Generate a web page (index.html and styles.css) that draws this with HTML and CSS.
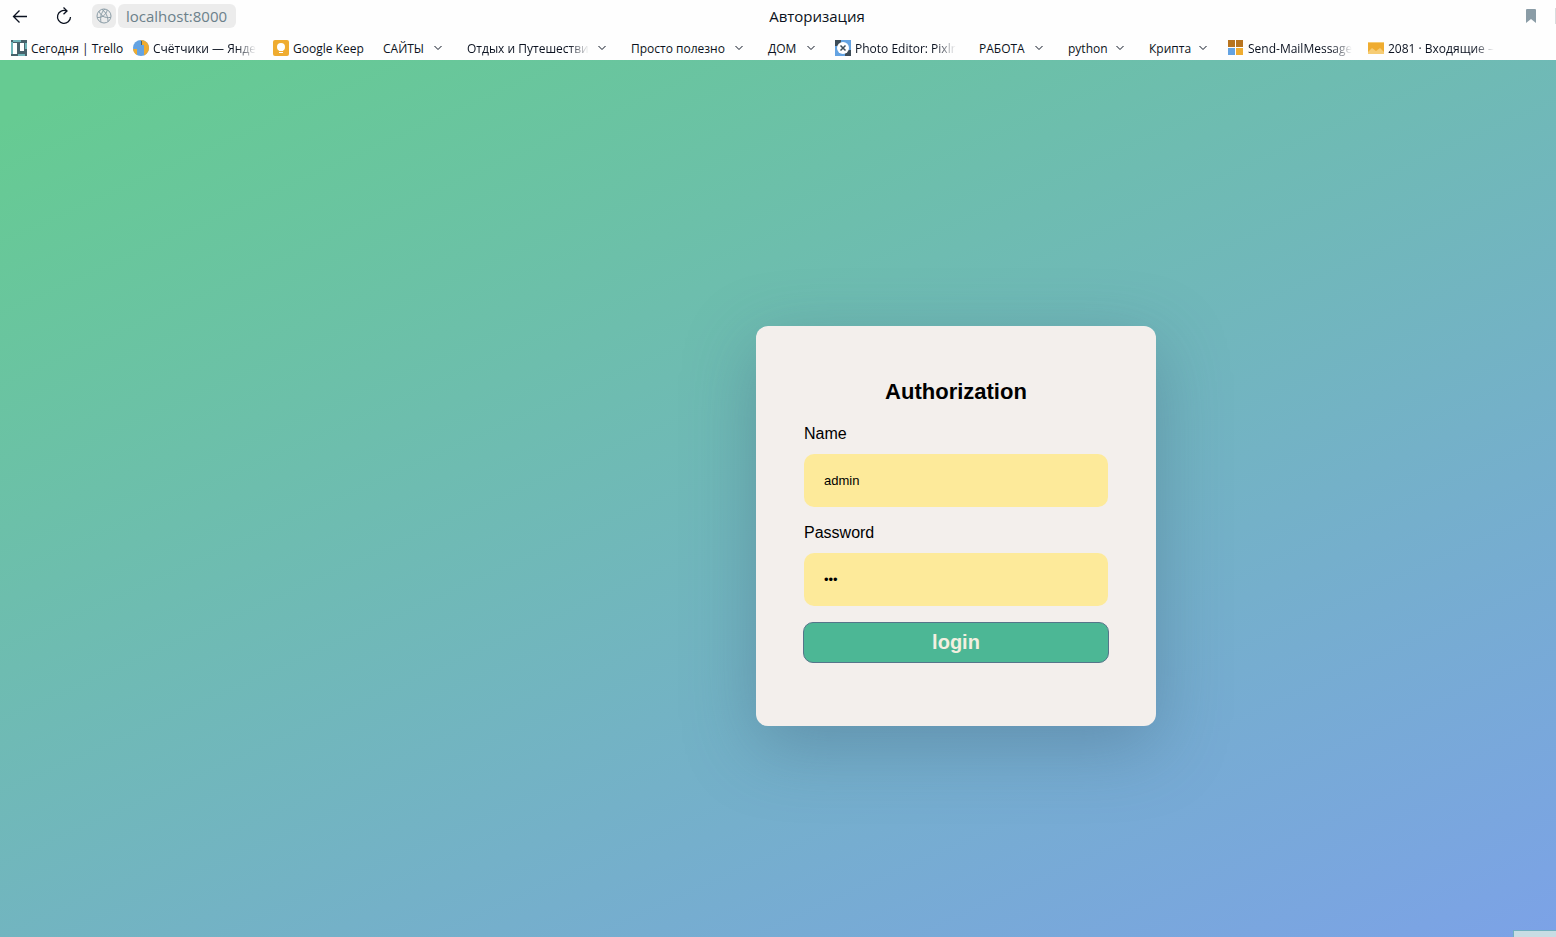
FILE: index.html
```html
<!DOCTYPE html>
<html lang="ru">
<head>
<meta charset="utf-8">
<title>Авторизация</title>
<link rel="stylesheet" href="styles.css">
</head>
<body>
<header class="browser">
  <div class="toolbar">
    <button class="tool" type="button" aria-label="Back"><svg width="16" height="16" viewBox="0 0 16 16"><path d="M15 8.500H1.500M7.500 2.500l-6 6 6 6"/></svg></button>
    <button class="tool" type="button" aria-label="Reload"><svg width="16" height="18" viewBox="0 0 16 18"><path d="M10.500 3.900A6.500 6.500 0 1 0 14.500 10M7.500 .5l3.500 3.400-3.500 3.300"/></svg></button>
    <div class="address">
      <button class="site" type="button" aria-label="Site information"><svg width="16" height="16" viewBox="0 0 16 16"><circle cx="8" cy="8" r="7"/><path d="M3 3.200C5 8 8 10 14.600 9.500M1.200 9.500C6 9.800 10 7 11.200 2M5 14.300C4 9 5 5 8.700 1.200M12 13.500C12 9 10 4 6 1.500"/></svg></button>
      <a class="url" href="#">localhost:8000</a>
    </div>
    <div class="page-title">Авторизация</div>
    <div class="actions">
      <button class="save" type="button" aria-label="Bookmark"><svg width="10" height="14" viewBox="0 0 10 14"><path d="M1 0h8a1 1 0 0 1 1 1v13L5 10 0 14V1a1 1 0 0 1 1-1z"/></svg></button>
      <span class="edge"></span>
    </div>
  </div>
  <nav class="bookmarks" aria-label="Bookmarks">
    <a class="mark" href="#"><svg width="16" height="16" viewBox="0 0 16 16"><path fill="#47626b" d="M0 0h16v16H0z"/><path fill="#70b5b9" d="M0 2h2v12H0zM2 0h8v2H2zM7 14h7v2H7zM14 3h2v6h-2z"/><path fill="#fff" d="M2 3h4v11H2zM9 3h4v8H9z"/></svg><span>Сегодня | Trello</span></a>
    <a class="mark cut" href="#"><svg width="16" height="16" viewBox="0 0 16 16"><circle cx="8" cy="8" r="8" fill="#64a3e2"/><path fill="#efac30" d="M8 0a8 8 0 0 1 3 15.400V5H8z"/><path fill="#efac30" d="M0 9h4v6A8 8 0 0 1 0 9z"/><path fill="#47626b" d="M8 1h1v4H8z"/></svg><span>Счётчики — Янде</span></a>
    <a class="mark" href="#"><svg width="16" height="16" viewBox="0 0 16 16"><rect width="16" height="16" rx="2" fill="#efac30"/><circle cx="8" cy="7" r="4" fill="#fff"/><path fill="#fff" d="M6 9h4v2H6zM6 12h4v1H6z"/></svg><span>Google Keep</span></a>
    <a class="mark folder" href="#"><span>САЙТЫ</span><svg width="8" height="6" viewBox="0 0 8 6"><path d="M.5 1L4 4.500 7.500 1"/></svg></a>
    <a class="mark folder cut" href="#"><span>Отдых и Путешестви</span><svg width="8" height="6" viewBox="0 0 8 6"><path d="M.5 1L4 4.500 7.500 1"/></svg></a>
    <a class="mark folder" href="#"><span>Просто полезно</span><svg width="8" height="6" viewBox="0 0 8 6"><path d="M.5 1L4 4.500 7.500 1"/></svg></a>
    <a class="mark folder last" href="#"><span>ДОМ</span><svg width="8" height="6" viewBox="0 0 8 6"><path d="M.5 1L4 4.500 7.500 1"/></svg></a>
    <a class="mark cut" href="#"><svg width="16" height="16" viewBox="0 0 16 16"><path fill="#64a3e2" d="M0 0h16v16H0z"/><path fill="#3d4c58" d="M0 0h6v6H0zM10 10h6v6h-6z"/><circle cx="8" cy="8" r="6" fill="#fff"/><path stroke="#3d4c58" stroke-width="1.500" d="M5.500 5.500l5 5M10.500 5.500l-5 5"/></svg><span>Photo Editor: Pixlr</span></a>
    <a class="mark folder" href="#"><span>РАБОТА</span><svg width="8" height="6" viewBox="0 0 8 6"><path d="M.5 1L4 4.500 7.500 1"/></svg></a>
    <a class="mark folder" href="#"><span>python</span><svg width="8" height="6" viewBox="0 0 8 6"><path d="M.5 1L4 4.500 7.500 1"/></svg></a>
    <a class="mark folder" href="#"><span>Крипта</span><svg width="8" height="6" viewBox="0 0 8 6"><path d="M.5 1L4 4.500 7.500 1"/></svg></a>
    <a class="mark cut" href="#"><svg width="16" height="16" viewBox="0 0 16 16"><path fill="#b8741f" d="M0 0h7v7H0zM8 0h7v7H8z"/><path fill="#64a3e2" d="M0 8h7v7H0z"/><path fill="#efac30" d="M8 8h7v7H8z"/></svg><span>Send-MailMessage</span></a>
    <a class="mark cut" href="#"><svg width="16" height="16" viewBox="0 0 16 16"><path fill="#efac30" d="M0 2h16v12H0z"/><path fill="#f6cc74" d="M0 2h16v1H0zM0 14v-2l4-4 4 3 4-3 4 4v2z"/></svg><span>2081 · Входящие –</span></a>
  </nav>
</header>
<main class="page">
  <form class="card">
    <h1 class="heading">Authorization</h1>
    <label class="label" for="name">Name</label>
    <input class="field" id="name" type="text" value="admin">
    <label class="label" for="password">Password</label>
    <input class="field" id="password" type="password" value="123">
    <button class="login" type="button">login</button>
  </form>
  <div class="status"></div>
</main>
</body>
</html>
```
FILE: styles.css
```css
* {
  box-sizing: border-box;
}

body {
  margin: 0;
  min-height: 100vh;
  display: flex;
  flex-direction: column;
  font-family: "Liberation Sans", Arial, sans-serif;
  color: #000;
}

button {
  border: 0;
  padding: 0;
  background: none;
}

.browser {
  background: #fefefe;
  font-family: "Open Sans", "Noto Sans", sans-serif;
  color: #0b1220;
}

.toolbar {
  display: flex;
  align-items: center;
  height: 32px;
  padding-left: 12px;
}

.tool {
  display: flex;
  width: 16px;
  margin-right: 28px;
}

.tool + .tool {
  margin-right: 20px;
}

.tool svg,
.site svg,
.folder svg {
  fill: none;
  stroke: #0b1220;
  stroke-width: 1.3;
}

.address {
  display: flex;
  gap: 2px;
}

.site {
  display: grid;
  place-items: center;
  width: 24px;
  height: 24px;
  border-radius: 6px;
  background: #ececec;
}

.site svg {
  stroke: #8a9ca6;
  stroke-width: 1;
}

.url {
  width: 118px;
  height: 24px;
  padding-left: 8px;
  border-radius: 6px;
  background: #ececec;
  color: #6b808a;
  font-size: 15px;
  line-height: 24px;
  text-decoration: none;
}

.page-title {
  flex: 1;
  text-align: center;
  font-size: 15px;
  line-height: 24px;
}

.actions {
  display: flex;
  justify-content: flex-end;
  align-items: center;
  gap: 19px;
  width: 158px;
}

.save {
  display: flex;
}

.save svg {
  fill: #8a9ca6;
}

.edge {
  width: 1px;
  height: 16px;
  background: #d8dcde;
}

.bookmarks {
  display: grid;
  grid-template-columns: 122px 140px 110px 84px 164px 137px 67px 144px 89px 81px 79px 140px 140px;
  height: 28px;
  padding: 4px 0 0 11px;
}

.mark {
  display: flex;
  align-items: center;
  gap: 4px;
  height: 24px;
  color: inherit;
  font-size: 12px;
  line-height: 16px;
  text-decoration: none;
  white-space: nowrap;
}

.mark svg {
  flex: none;
}

.mark span {
  padding-top: 1px;
}

.cut span {
  -webkit-mask-image: linear-gradient(to left, transparent, #000 20px);
  mask-image: linear-gradient(to left, transparent, #000 20px);
}

.folder {
  justify-content: space-between;
  gap: 8px;
  padding-right: 25px;
}

.last {
  padding-right: 20px;
}

.folder svg {
  stroke-width: 1;
}

.page {
  position: relative;
  flex: 1;
  display: flex;
  justify-content: center;
  align-items: center;
  padding: 55px 0 0 356px;
  background: linear-gradient(156deg, #66cb92 4%, #7ca2e7 100%);
}

.card {
  display: flex;
  flex-direction: column;
  width: 400px;
  min-height: 400px;
  padding: 48px;
  border-radius: 12px;
  background: #f3efec;
  box-shadow: 0 20px 70px rgba(60, 90, 120, 0.36);
}

.heading {
  margin: 0 0 16px;
  font-size: 22px;
  line-height: 36px;
  text-align: center;
}

.label {
  padding-bottom: 12px;
  font-size: 16px;
  line-height: 16px;
}

.field {
  height: 53px;
  margin-bottom: 18px;
  padding: 0 20px;
  border: 0;
  border-radius: 10px;
  outline: 0;
  background: #fdea9a;
  font-family: inherit;
  font-size: 13px;
  color: #000;
}

.login {
  height: 41px;
  margin: -2px -1px 0;
  border: 1px solid #55758a;
  border-radius: 10px;
  background: #4cb795;
  color: #f3efe0;
  font-family: inherit;
  font-size: 20px;
  font-weight: 700;
}

.status {
  position: absolute;
  right: 0;
  bottom: 0;
  width: 43px;
  height: 7px;
  border: 1px solid #70b0c0;
  border-width: 1px 0 0 1px;
  background: #c8dde4;
}
```
